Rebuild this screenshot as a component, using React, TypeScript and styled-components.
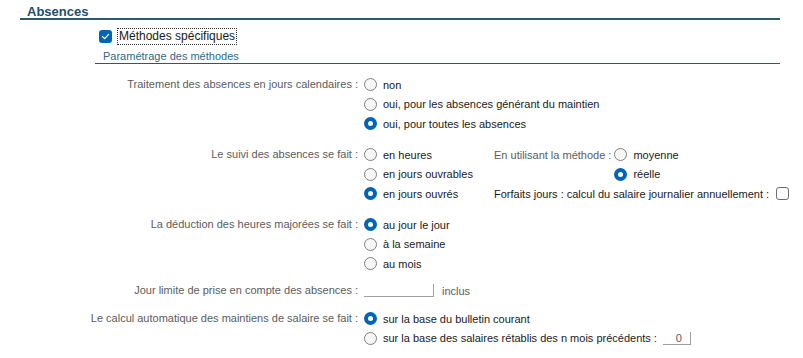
import React from 'react';
import styled, {createGlobalStyle} from "styled-components";

const GlobalStyle = createGlobalStyle`
  html, body {
    margin: 0;
    padding: 0;
    background: #ffffff;
  }
  body {
    font-family: "Liberation Sans", Arial, sans-serif;
    font-size: 11px;
    color: #1a1a1a;
  }
`

const Radio = ({checked}: { checked?: boolean }) => <RadioDot $checked={checked}/>

const Check = ({checked}: { checked?: boolean }) => (
    <CheckBox $checked={checked}>
        {checked && (
            <svg width="9" height="9" viewBox="0 0 9 9">
                <path d="M1.5 4.6 L3.6 6.6 L7.6 2.4" fill="none" stroke="#fff" strokeWidth="1.3"
                      strokeLinecap="round" strokeLinejoin="round"/>
            </svg>
        )}
    </CheckBox>
)

const Choice = ({label, checked}: { label: string, checked?: boolean }) => (
    <Option>
        <Radio checked={checked}/>
        <span>{label}</span>
    </Option>
)

export default function App() {
    return (
        <Page>
            <GlobalStyle/>
            <SectionTitle>Absences</SectionTitle>
            <SpecificRow>
                <Check checked/>
                <FocusLabel>Méthodes spécifiques</FocusLabel>
            </SpecificRow>
            <SubTitle>Paramétrage des méthodes</SubTitle>

            <Field $top={11}>
                <Label>Traitement des absences en jours calendaires :</Label>
                <Options>
                    <Choice label="non"/>
                    <Choice label="oui, pour les absences générant du maintien"/>
                    <Choice label="oui, pour toutes les absences" checked/>
                </Options>
            </Field>

            <Field $top={11.5}>
                <Label>Le suivi des absences se fait :</Label>
                <Tracking>
                    <Choice label="en heures"/>
                    <SubLabel>En utilisant la méthode :</SubLabel>
                    <Choice label="moyenne"/>
                    <Choice label="en jours ouvrables"/>
                    <span/>
                    <Choice label="réelle" checked/>
                    <Choice label="en jours ouvrés" checked/>
                    <Forfait>
                        <span>Forfaits jours : calcul du salaire journalier annuellement :</span>
                        <Check/>
                    </Forfait>
                </Tracking>
            </Field>

            <Field $top={11.5}>
                <Label>La déduction des heures majorées se fait :</Label>
                <Options>
                    <Choice label="au jour le jour" checked/>
                    <Choice label="à la semaine"/>
                    <Choice label="au mois"/>
                </Options>
            </Field>

            <Field $top={7.5}>
                <Label>Jour limite de prise en compte des absences :</Label>
                <Option>
                    <Input $width={70}/>
                    <Muted>inclus</Muted>
                </Option>
            </Field>

            <Field $top={8.5}>
                <Label>Le calcul automatique des maintiens de salaire se fait :</Label>
                <Options>
                    <Choice label="sur la base du bulletin courant" checked/>
                    <Option>
                        <Radio/>
                        <span>sur la base des salaires rétablis des n mois précédents :</span>
                        <Input $width={28}>0</Input>
                    </Option>
                </Options>
            </Field>
        </Page>
    );
}

const Page = styled.div`
  width: 803px;
  height: 358px;
  overflow: hidden;
  padding-top: 4px;
  box-sizing: border-box;
`

const SectionTitle = styled.div`
  margin: 0 23px 0 20px;
  padding: 0 0 0 7px;
  height: 14px;
  line-height: 16px;
  font-size: 13px;
  font-weight: bold;
  color: #1f4f6c;
  border-bottom: 2px solid #2d5a6e;
`

const SpecificRow = styled.div`
  display: flex;
  align-items: center;
  gap: 5px;
  margin: 7px 0 0 99px;
  height: 18px;
`

const FocusLabel = styled.span`
  font-size: 12px;
  line-height: 15px;
  padding: 0 1px;
  border: 1px dotted #333;
`

const SubTitle = styled.div`
  margin: 4px 23px 0 95px;
  padding-left: 8px;
  height: 14px;
  line-height: 14px;
  font-size: 11px;
  color: #2d6a8c;
  border-bottom: 1px solid #34566a;
`

const Field = styled.div<{ $top: number }>`
  display: grid;
  grid-template-columns: 364px 1fr;
  margin-top: ${p => p.$top}px;
`

const Label = styled.div`
  text-align: right;
  padding-right: 6px;
  line-height: 19.5px;
  white-space: nowrap;
  color: #5c5c5c;
`

const Options = styled.div`
  display: flex;
  flex-direction: column;
`

const Option = styled.div`
  display: flex;
  align-items: center;
  gap: 6px;
  height: 19.5px;
  white-space: nowrap;
  color: #1a1a1a;
`

const Tracking = styled.div`
  display: grid;
  grid-template-columns: 130px auto 1fr;
  grid-auto-rows: 19.5px;
  align-items: center;
`

const SubLabel = styled.div`
  color: #5c5c5c;
  white-space: nowrap;
  padding-right: 3px;
`

const Forfait = styled.div`
  grid-column: 2 / span 2;
  display: flex;
  align-items: center;
  gap: 7px;
  white-space: nowrap;
  color: #1a1a1a;
`

const Muted = styled.span`
  color: #5c5c5c;
  margin-left: 2px;
`

const Input = styled.div<{ $width: number }>`
  width: ${p => p.$width}px;
  height: 13px;
  box-sizing: border-box;
  border-bottom: 1px solid #a0a0a0;
  border-right: 1px solid #a0a0a0;
  text-align: right;
  padding-right: 8px;
  line-height: 12px;
  color: #5c5c5c;
`

const RadioDot = styled.span<{ $checked?: boolean }>`
  flex: none;
  width: 13px;
  height: 13px;
  box-sizing: border-box;
  border-radius: 50%;
  background: ${p => p.$checked ? '#0064b8' : '#f7f7f7'};
  border: ${p => p.$checked ? 'none' : '1px solid #7f7f7f'};
  position: relative;
  &::after {
    content: '';
    display: ${p => p.$checked ? 'block' : 'none'};
    position: absolute;
    left: 4px;
    top: 4px;
    width: 5px;
    height: 5px;
    border-radius: 50%;
    background: #fff;
  }
`

const CheckBox = styled.span<{ $checked?: boolean }>`
  flex: none;
  display: inline-flex;
  align-items: center;
  justify-content: center;
  width: 13px;
  height: 13px;
  box-sizing: border-box;
  border-radius: 3px;
  background: ${p => p.$checked ? '#0064b8' : '#fbfbfb'};
  border: ${p => p.$checked ? 'none' : '1px solid #6e6e6e'};
`
